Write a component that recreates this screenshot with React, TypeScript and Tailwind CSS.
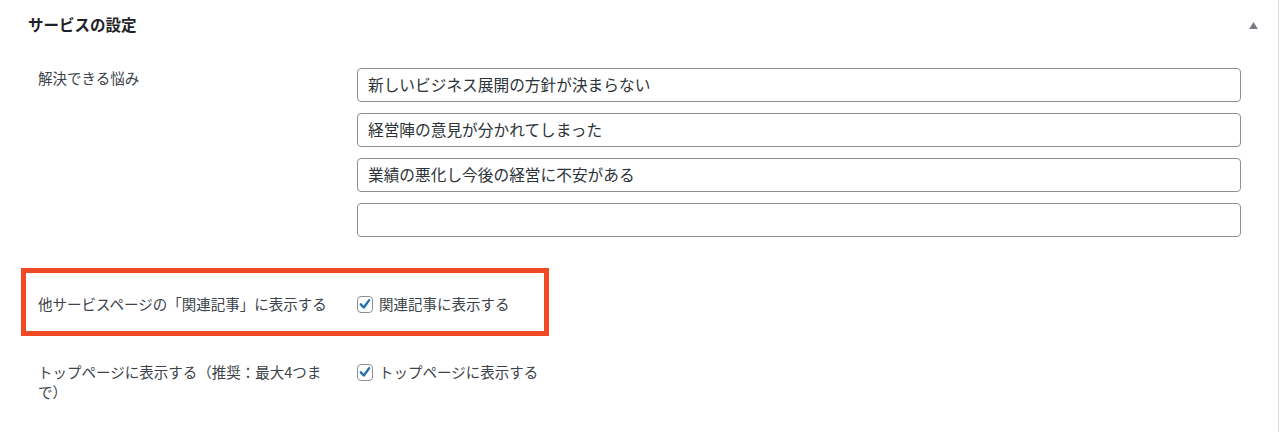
const font = { fontFamily: '"Noto Sans CJK JP", "Noto Sans", sans-serif' };

const worries = [
  '新しいビジネス展開の方針が決まらない',
  '経営陣の意見が分かれてしまった',
  '業績の悪化し今後の経営に不安がある',
  '',
];

function Checkbox() {
  return (
    <span className="flex h-[17px] w-[16px] shrink-0 items-center justify-center rounded-[4px] border border-[#8c8f94] bg-white">
      <svg viewBox="0 0 20 20" className="h-[16px] w-[16px]">
        <path d="M4 10.5 L8.3 15 L16 4.5" fill="none" stroke="#2271b1" strokeWidth="3.4" strokeLinecap="round" strokeLinejoin="round" />
      </svg>
    </span>
  );
}

function CheckField({ label }: { label: string }) {
  return (
    <label className="flex items-center gap-[6px] text-[14.5px] leading-[20px] text-[#3c434a]">
      <Checkbox />
      <span>{label}</span>
    </label>
  );
}

export default function App() {
  return (
    <div className="h-[432px] w-[1279px] border-r border-[#dcdcde] bg-white" style={font}>
      <div className="flex h-[50px] items-center justify-between pl-[28px] pr-[20px]">
        <h2 className="text-[15.5px] font-bold text-[#1d2327]">サービスの設定</h2>
        <svg viewBox="0 0 10 8" className="h-[7px] w-[9px]">
          <path d="M5 0 L10 8 L0 8 Z" fill="#787c82" />
        </svg>
      </div>

      <div className="mt-[18px] flex pl-[38px] pr-[37px]">
        <div className="w-[319px] shrink-0 text-[14.5px] leading-[20px] text-[#3c434a]">解決できる悩み</div>
        <div className="flex flex-1 flex-col gap-[11px]">
          {worries.map((w, i) => (
            <div
              key={i}
              className="flex h-[34px] items-center rounded-[4px] border border-[#8c8f94] bg-white px-[10px] text-[15.7px] text-[#2c3338]"
            >
              {w}
            </div>
          ))}
        </div>
      </div>

      <div className="ml-[21px] mt-[31px] h-[68px] w-[528px] border-[5px] border-[#ef4a23] pl-[12px] pt-[21px]">
        <div className="flex">
          <div className="w-[319px] shrink-0 text-[14.5px] leading-[20px] text-[#3c434a]">他サービスページの「関連記事」に表示する</div>
          <CheckField label="関連記事に表示する" />
        </div>
      </div>

      <div className="mt-[26px] flex pl-[38px]">
        <div className="w-[319px] shrink-0 pr-[26px] text-[14.5px] leading-[20px] text-[#3c434a]">
          トップページに表示する（推奨：最大4つまで）
        </div>
        <div className="h-[20px]">
          <CheckField label="トップページに表示する" />
        </div>
      </div>
    </div>
  );
}
